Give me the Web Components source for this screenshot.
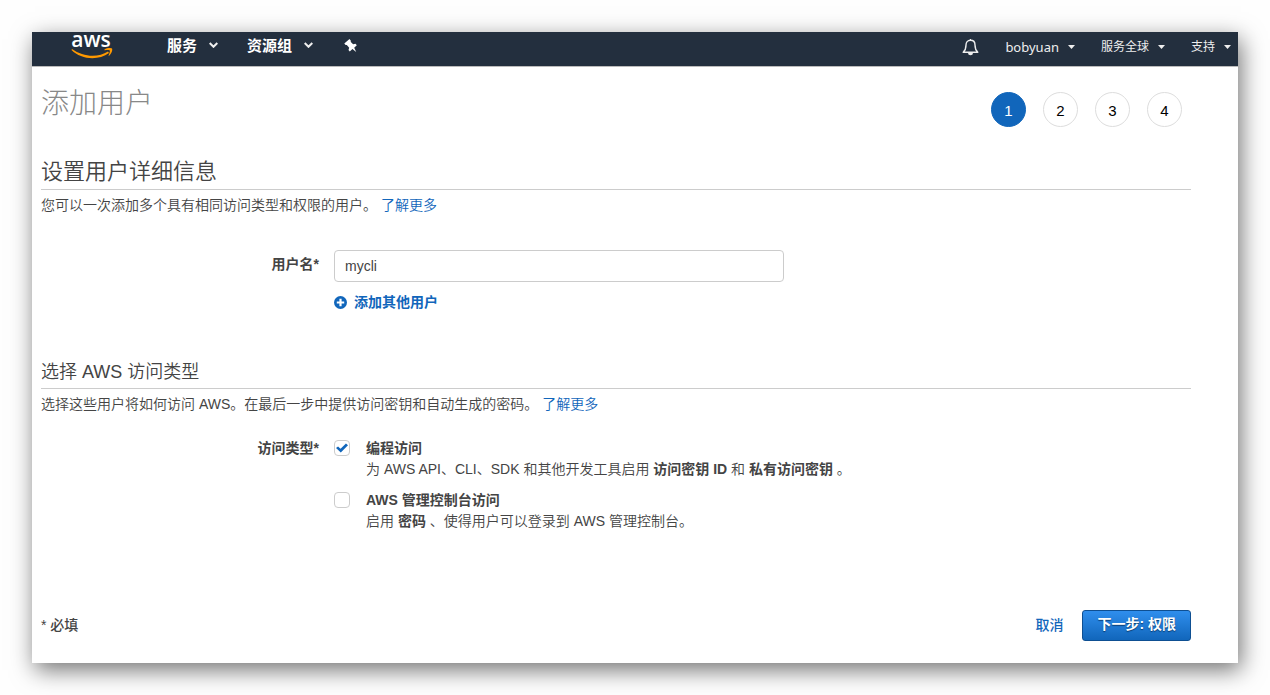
<!DOCTYPE html>
<html lang="zh-CN">
<head>
<meta charset="utf-8">
<meta name="viewport" content="width=device-width, initial-scale=1">
<title>添加用户</title>
<style>
  body {
    margin: 0;
    padding: 32px;
    background: #fefefe;
    color: #444;
    font: 14px/21px "Liberation Sans", "Noto Sans CJK SC", sans-serif;
    --link: #1166bb;
    --rule: #ccc;
  }
</style>
</head>
<body>
<console-window>
  <console-nav slot="nav">
    <nav-menu kind="main">服务</nav-menu>
    <nav-menu kind="main">资源组</nav-menu>
    <nav-menu slot="account">bobyuan</nav-menu>
    <nav-menu slot="account" kind="small">服务全球</nav-menu>
    <nav-menu slot="account" kind="small">支持</nav-menu>
  </console-nav>

  <page-title>添加用户<step-list slot="steps" total="4" current="1"></step-list></page-title>

  <form-section size="large">
    <span slot="heading">设置用户详细信息</span>
    <span slot="intro">您可以一次添加多个具有相同访问类型和权限的用户。</span>
    <text-field label="用户名*" value="mycli" add="添加其他用户"></text-field>
  </form-section>

  <form-section>
    <span slot="heading">选择 AWS 访问类型</span>
    <span slot="intro">选择这些用户将如何访问 AWS。在最后一步中提供访问密钥和自动生成的密码。</span>
    <option-group label="访问类型*">
      <check-option label="编程访问" checked>为 AWS API、CLI、SDK 和其他开发工具启用 <b>访问密钥 ID</b> 和 <b>私有访问密钥</b> 。</check-option>
      <check-option label="AWS 管理控制台访问">启用 <b>密码</b> 、使得用户可以登录到 AWS 管理控制台。</check-option>
    </option-group>
  </form-section>

  <action-bar note="* 必填" cancel="取消" next="下一步: 权限"></action-bar>
</console-window>

<script>
  const define = (name, render) => customElements.define(name, class extends HTMLElement {
    connectedCallback() {
      if (this.shadowRoot) return;
      this.attachShadow({ mode: "open" }).innerHTML = render(this);
    }
  });

  define("console-window", () => `
    <style>
      :host { display: block; background: #fff; box-shadow: 3px 7px 22px rgba(0,0,0,.55); }
      main { padding: 25px 47px 22px 9px; }
    </style>
    <slot name="nav"></slot>
    <main><slot></slot></main>`);

  define("console-nav", () => `
    <style>
      :host { display: block; }
      header { display: flex; align-items: center; box-sizing: border-box; height: 35px; padding: 0 7px 8px 39px;
        background: #232f3e; border-bottom: 1px solid #bbb; color: #fff; }
      nav { display: flex; align-items: center; gap: 29px; }
      .account { margin-left: auto; padding-top: 4px; gap: 26px; }
      .logo { display: block; margin-right: 54px; }
      .logo svg, button svg { display: block; }
      .logo svg { overflow: visible; }
      .logo text { font: 600 21px/1 "Open Sans", sans-serif; fill: #fff; }
      button { padding: 0; border: 0; background: none; color: inherit; }
    </style>
    <header>
      <a class="logo" href="#" aria-label="AWS">
        <svg width="42" height="26" viewBox="0 0 42 26">
          <text x="20" y="15" text-anchor="middle">aws</text>
          <path d="M1 17c11 8 26 9 36 2.500l1 1.500C27 29 10 27.500.5 18z" fill="#f90"/>
          <path d="M33.500 17.500c2.500-1.700 6.500-1.600 7.500-.9.800 1-.3 5.200-2.800 7.200-.4.300-.7.100-.6-.3.700-1.800 1.700-4.300 1.200-5-.5-.6-3.300-.5-4.900-.3-.5 0-.7-.4-.4-.7z" fill="#f90"/>
        </svg>
      </a>
      <nav>
        <slot></slot>
        <button aria-label="固定">
          <svg width="18" height="16" viewBox="0 0 18 16"><path d="M4 5 7.500 2l1.500 2-.4.800 2.500 2.400 2.400-.5 1.300 1.600-2.600 2.400 2 4.300-3.800-3-2.600 2.600-1.300-1.500.7-2.300L4.800 7.900 3.600 8 2.300 6.400z" fill="#fff"/></svg>
        </button>
      </nav>
      <nav class="account">
        <button aria-label="通知">
          <svg width="17" height="18" viewBox="0 0 17 18"><path d="M8.500 1v1.500M8.500 2.300C5.500 2.300 4 4.300 4 7c0 4-.8 5.500-2.800 7.200h14.600C13.800 12.500 13 11 13 7c0-2.700-1.500-4.700-4.500-4.700z" fill="none" stroke="#eee" stroke-width="1.400" stroke-linejoin="round"/><path d="M6 15h5a2.500 2.300 0 0 1-5 0z" fill="#eee"/></svg>
        </button>
        <slot name="account"></slot>
      </nav>
    </header>`);

  define("nav-menu", el => `
    <style>
      :host { display: block; }
      button { display: flex; align-items: center; gap: 9px; padding: 0; border: 0; background: none; color: #eee;
        font: 13px/24px "Noto Sans", "Noto Sans CJK SC", sans-serif; white-space: nowrap; }
      :host([kind=main]) button { gap: 12px; color: #fff; font-size: 15px; font-weight: 700; }
      :host([kind=small]) button { font-size: 12px; }
      svg { display: block; }
    </style>
    <button aria-haspopup="true"><slot></slot>${el.getAttribute("kind") === "main"
      ? `<svg width="9" height="6" viewBox="0 0 9 6"><path d="m.7 1 3.800 3.800L8.300 1" fill="none" stroke="#eee" stroke-width="2"/></svg>`
      : `<svg width="7" height="4" viewBox="0 0 7 4"><path d="M0 0h7L3.500 4z" fill="#eee"/></svg>`}
    </button>`);

  define("page-title", () => `
    <style>
      :host { display: flex; justify-content: space-between; align-items: flex-start; padding-right: 9px; }
      h1 { margin: 0; font-size: 28px; line-height: 24px; font-weight: 300; color: #888; }
    </style>
    <h1><slot></slot></h1><slot name="steps"></slot>`);

  define("step-list", el => {
    const current = Number(el.getAttribute("current"));
    const items = Array.from({ length: Number(el.getAttribute("total")) }, (_, i) =>
      `<li${i + 1 === current ? ' aria-current="step"' : ""}>${i + 1}</li>`).join("");
    return `
    <style>
      :host { display: block; }
      ol { display: flex; gap: 17px; margin: 0; padding: 0; list-style: none; }
      li { box-sizing: border-box; width: 35px; height: 35px; border: 1px solid #ddd; border-radius: 50%;
        color: #000; font-size: 15px; line-height: 35px; text-align: center; }
      li[aria-current] { background: #1166bb; border-color: #1166bb; color: #fff; }
    </style>
    <ol>${items}</ol>`;
  });

  define("form-section", () => `
    <style>
      :host { display: block; margin-top: 47px; }
      :host([size=large]) { margin-top: 31px; }
      h2 { margin: 0; padding-bottom: 4px; border-bottom: 1px solid var(--rule); font-size: 18px; line-height: 24px; font-weight: 350; color: #444; }
      :host([size=large]) h2 { padding-bottom: 3px; font-size: 22px; line-height: 28px; }
      p { margin: 5px 0 24px; line-height: 20px; font-weight: 350; }
      :host([size=large]) p { margin-bottom: 35px; }
      a { color: var(--link); text-decoration: none; }
    </style>
    <h2><slot name="heading"></slot></h2>
    <p><slot name="intro"></slot> <a href="#">了解更多</a></p>
    <slot></slot>`);

  define("text-field", el => `
    <style>
      :host { display: grid; grid-template-columns: 278px minmax(0, 450px); column-gap: 15px; }
      label { padding-top: 4px; text-align: right; font-weight: 700; }
      input { box-sizing: border-box; width: 100%; height: 32px; padding: 0 10px; border: 1px solid #ccc; border-radius: 4px;
        background: #fff; color: #444; font: inherit; display: block; }
      button { grid-column: 2; justify-self: start; display: flex; align-items: center; gap: 7px; margin-top: 10px; padding: 0; border: 0;
        background: none; color: var(--link); font: inherit; font-weight: 700; }
      svg { display: block; }
    </style>
    <label for="field">${el.getAttribute("label")}</label>
    <input id="field" type="text" value="${el.getAttribute("value")}">
    <button type="button">
      <svg width="13" height="13" viewBox="0 0 13 13"><circle cx="6.500" cy="6.500" r="6.500" fill="#1166bb"/><path d="M6.500 2.800v7.400M2.800 6.500h7.400" stroke="#fff" stroke-width="2.200"/></svg>
      ${el.getAttribute("add")}
    </button>`);

  define("option-group", el => `
    <style>
      :host { display: block; }
      div { display: grid; grid-template-columns: 278px 1fr; column-gap: 15px; }
      #name { text-align: right; font-weight: 700; }
      section { display: grid; row-gap: 10px; }
    </style>
    <div role="group" aria-labelledby="name">
      <span id="name">${el.getAttribute("label")}</span>
      <section><slot></slot></section>
    </div>`);

  define("check-option", el => `
    <style>
      :host { display: grid; grid-template-columns: 16px 1fr; column-gap: 16px; }
      input { appearance: none; box-sizing: border-box; display: grid; place-items: center; width: 16px; height: 16px; margin: 2px 0 0;
        border: 1px solid #ccc; border-radius: 4px; background: #fff; }
      input:checked::before { content: ""; width: 12px; height: 10px; background: #1166bb;
        clip-path: polygon(0 50%, 17% 35%, 38% 57%, 83% 5%, 100% 22%, 40% 95%); }
      label { font-weight: 700; }
      p { grid-column: 2; margin: 0; font-weight: 350; }
      ::slotted(b) { font-weight: 700; }
    </style>
    <input id="box" type="checkbox"${el.hasAttribute("checked") ? " checked" : ""} aria-describedby="about">
    <label for="box">${el.getAttribute("label")}</label>
    <p id="about"><slot></slot></p>`);

  define("action-bar", el => `
    <style>
      :host { display: flex; align-items: center; gap: 19px; margin-top: 78px; }
      span { margin-right: auto; font-weight: 500; }
      a { color: var(--link); font-weight: 500; text-decoration: none; }
      button { height: 31px; padding: 0 14px 2px; border: 1px solid #0e4f92; border-radius: 3px;
        background: linear-gradient(#2f8eed, #1166bb); color: #fff; font: inherit; font-weight: 700; text-shadow: 0 1px 1px #0a3c70; }
    </style>
    <span>${el.getAttribute("note")}</span>
    <a href="#">${el.getAttribute("cancel")}</a>
    <button type="button">${el.getAttribute("next")}</button>`);
</script>
</body>
</html>
